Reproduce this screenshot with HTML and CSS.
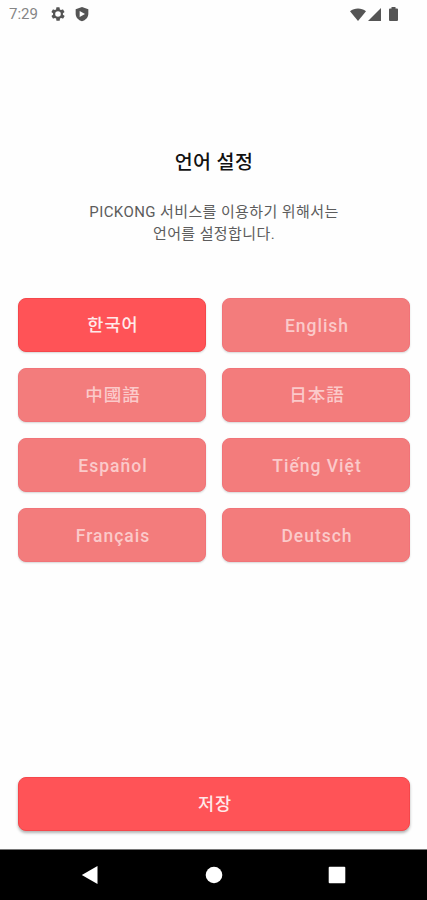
FILE: index.html
```html
<!DOCTYPE html>
<html lang="ko">
<head>
<meta charset="utf-8">
<meta name="viewport" content="width=device-width">
<title>언어 설정</title>
<link rel="stylesheet" href="styles.css">
</head>
<body>
<header class="status">
  <span class="time">7:29</span>
  <svg class="gear" width="16" height="16" viewBox="0 0 24 24"><path fill-rule="evenodd" d="M19.4 13a7.500 7.500 0 0 0 0-2l2.100-1.600a.5.500 0 0 0 .1-.6l-2-3.500a.5.500 0 0 0-.6-.2l-2.500 1a7.700 7.700 0 0 0-1.700-1l-.4-2.600A.5.500 0 0 0 14 2h-4a.5.500 0 0 0-.5.400l-.4 2.700a7.700 7.700 0 0 0-1.700 1l-2.500-1a.5.500 0 0 0-.6.200l-2 3.500a.5.500 0 0 0 .1.600L4.600 11a7.500 7.500 0 0 0 0 2l-2.100 1.600a.5.500 0 0 0-.1.600l2 3.500c.1.200.4.300.6.200l2.500-1c.5.400 1.100.7 1.700 1l.4 2.700c0 .2.200.4.500.4h4c.2 0 .5-.2.500-.4l.4-2.700c.6-.3 1.200-.6 1.700-1l2.500 1c.2.100.5 0 .6-.2l2-3.500a.5.500 0 0 0-.1-.6zM12 16.200a4.200 4.200 0 1 1 0-8.400 4.200 4.200 0 0 1 0 8.400z"/></svg>
  <svg class="shield" width="16" height="16" viewBox="0 0 24 24"><path fill-rule="evenodd" d="M12 1.500 2.500 5v6.500c0 5.500 4 9.500 9.500 11.500 5.500-2 9.500-6 9.500-11.500V5zM8.500 7.500 16.500 12l-8 4.500z"/></svg>
  <svg class="wifi" width="16" height="13" viewBox="0 0 16 13"><path d="M0 3.200C4.500-.5 11.500-.5 16 3.200L8 13z"/></svg>
  <svg class="signal" width="13" height="13" viewBox="0 0 13 13"><path d="M13 0v13H0z"/></svg>
  <svg class="battery" width="9" height="14" viewBox="0 0 9 14"><path d="M2.500 0h4v1.500H8a1 1 0 0 1 1 1V13a1 1 0 0 1-1 1H1a1 1 0 0 1-1-1V2.500a1 1 0 0 1 1-1h1.500z"/></svg>
</header>
<main class="page">
  <h1 class="title">언어 설정</h1>
  <p class="desc">PICKONG 서비스를 이용하기 위해서는<br>언어를 설정합니다.</p>
  <div class="grid">
    <button class="btn">한국어</button>
    <button class="btn dim">English</button>
    <button class="btn dim" lang="zh-Hant">中國語</button>
    <button class="btn dim" lang="ja">日本語</button>
    <button class="btn dim">Español</button>
    <button class="btn dim">Tiếng Việt</button>
    <button class="btn dim">Français</button>
    <button class="btn dim">Deutsch</button>
  </div>
  <button class="btn save">저장</button>
</main>
<nav class="nav">
  <svg width="18" height="20" viewBox="0 0 18 20"><path d="M16.500 1v18L.8 10z"/></svg>
  <svg width="18" height="18" viewBox="0 0 18 18"><circle cx="9" cy="9" r="8.300"/></svg>
  <svg width="18" height="18" viewBox="0 0 18 18"><rect x=".7" y=".7" width="16.600" height="16.600" rx="1"/></svg>
</nav>
</body>
</html>
```
FILE: styles.css
```css
* { box-sizing: border-box; }
body {
  margin: 0;
  width: 427px;
  height: 900px;
  display: flex;
  flex-direction: column;
  overflow: hidden;
  background: #fefefe;
  font-family: Roboto, "Noto Sans CJK KR", sans-serif;
}
.status {
  height: 28px;
  display: flex;
  align-items: center;
  padding: 0 29px 0 9px;
  color: #858585;
  fill: #555;
}
.time { width: 41px; font-size: 15px; line-height: 28px; }
.shield { margin-left: 8px; }
.wifi { margin-left: auto; }
.signal { margin-left: 2px; }
.battery { margin-left: 8px; }
.page {
  flex: 1;
  display: flex;
  flex-direction: column;
  padding: 121px 17px 18px 18px;
}
.title {
  margin: 0;
  font-size: 19.500px;
  line-height: 28px;
  font-weight: 500;
  letter-spacing: .4px;
  text-align: center;
  color: #111;
}
.desc {
  margin: 24px 0 0;
  font-size: 15px;
  line-height: 22px;
  letter-spacing: .4px;
  text-align: center;
  color: #5c5c5c;
}
.grid {
  margin-top: 53px;
  display: grid;
  grid-template-columns: 1fr 1fr;
  gap: 16px;
}
.btn {
  height: 54px;
  padding: 1px 0 0 2px;
  border: 1px solid #f5474b;
  border-radius: 8px;
  background: #ff5357;
  color: #ffe9e9;
  font: 500 17.500px/51px Roboto, "Noto Sans CJK KR", sans-serif;
  letter-spacing: 1px;
  box-shadow: 0 1px 2px rgba(0, 0, 0, .16);
}
.dim {
  border-color: #f17378;
  background: #f37c7c;
  color: #fbcaca;
}
.dim:lang(ko) { padding-top: 2px; line-height: 50px; }
.dim:lang(zh-Hant) { font-family: Roboto, "Noto Sans CJK TC", sans-serif; }
.dim:lang(ja) { font-family: Roboto, "Noto Sans CJK JP", sans-serif; }
.save {
  margin-top: auto;
  box-shadow: 0 2px 3px rgba(0, 0, 0, .3);
}
.nav {
  height: 51px;
  display: flex;
  align-items: center;
  justify-content: space-between;
  padding: 0 81px;
  border-top: 1px solid #777;
  background: #000;
  fill: #fff;
}
```
